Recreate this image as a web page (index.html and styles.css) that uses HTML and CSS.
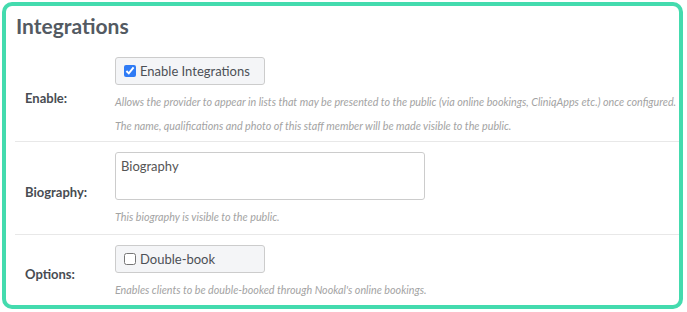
FILE: index.html
```html
<!DOCTYPE html>
<html lang="en">
<head>
    <meta charset="UTF-8">
    <meta name="viewport" content="width=device-width, initial-scale=1.0">
    <title>Integrations</title>
    <link rel="stylesheet" href="styles.css">
</head>
<body>
    <div class="panel">
        <h2 class="panel-title">Integrations</h2>
        <div class="row">
            <label class="row-label">Enable:</label>
            <div class="row-field">
                <label class="check-btn"><input type="checkbox" checked> Enable Integrations</label>
                <p class="help">Allows the provider to appear in lists that may be presented to the public (via online bookings, CliniqApps etc.) once configured.<br>The name, qualifications and photo of this staff member will be made visible to the public.</p>
            </div>
        </div>
        <div class="row">
            <label class="row-label">Biography:</label>
            <div class="row-field">
                <textarea class="bio" placeholder="Biography"></textarea>
                <p class="help">This biography is visible to the public.</p>
            </div>
        </div>
        <div class="row">
            <label class="row-label">Options:</label>
            <div class="row-field">
                <label class="check-btn"><input type="checkbox"> Double-book</label>
                <p class="help">Enables clients to be double-booked through Nookal's online bookings.</p>
            </div>
        </div>
    </div>
</body>
</html>
```

FILE: styles.css
```css
body {
    margin: 2px 4px 3px 2px;
    font-family: Lato, "Open Sans", sans-serif;
    color: #444;
    background: #fff;
}
.panel {
    border: 4px solid #44dbae;
    border-radius: 10px;
    height: 299px;
    padding: 0 0 0 9px;
    box-sizing: content-box;
    overflow: hidden;
}
.panel-title {
    margin: 0;
    padding: 7px 0 0 1px;
    height: 34px;
    font-size: 21px;
    font-weight: 700;
    line-height: 26px;
    color: #535a62;
}
.row {
    display: flex;
    align-items: center;
    padding: 10px 0 3px;
    border-top: 1px solid #e8e8e8;
}
.row:first-of-type {
    border-top: none;
}
.row-label {
    width: 100px;
    padding-left: 10px;
    box-sizing: border-box;
    font-size: 13px;
    font-weight: 700;
    color: #484c52;
}
.row-field {
    flex: 1;
    min-width: 0;
}
.check-btn {
    display: flex;
    align-items: center;
    gap: 4px;
    width: 150px;
    height: 28px;
    box-sizing: border-box;
    padding: 0 8px;
    background: #f4f5f7;
    border: 1px solid #ccc;
    border-radius: 3px;
    font-size: 13px;
    white-space: nowrap;
    color: #4c5056;
}
.check-btn input {
    margin: 0;
    width: 12px;
    height: 12px;
    accent-color: #2f7bf5;
}
.bio {
    display: block;
    width: 310px;
    height: 48px;
    margin-bottom: 1px;
    box-sizing: border-box;
    padding: 5px 5px;
    border: 1px solid #ccc;
    border-radius: 3px;
    font-family: Lato, sans-serif;
    font-size: 13px;
    resize: none;
}
.bio::placeholder {
    color: #555;
}
.bio + .help {
    margin-bottom: 2px;
}
.help {
    margin: 5px 0 0;
    font-size: 10.75px;
    font-style: italic;
    line-height: 24px;
    white-space: nowrap;
    color: #a3a3a3;
}
```
